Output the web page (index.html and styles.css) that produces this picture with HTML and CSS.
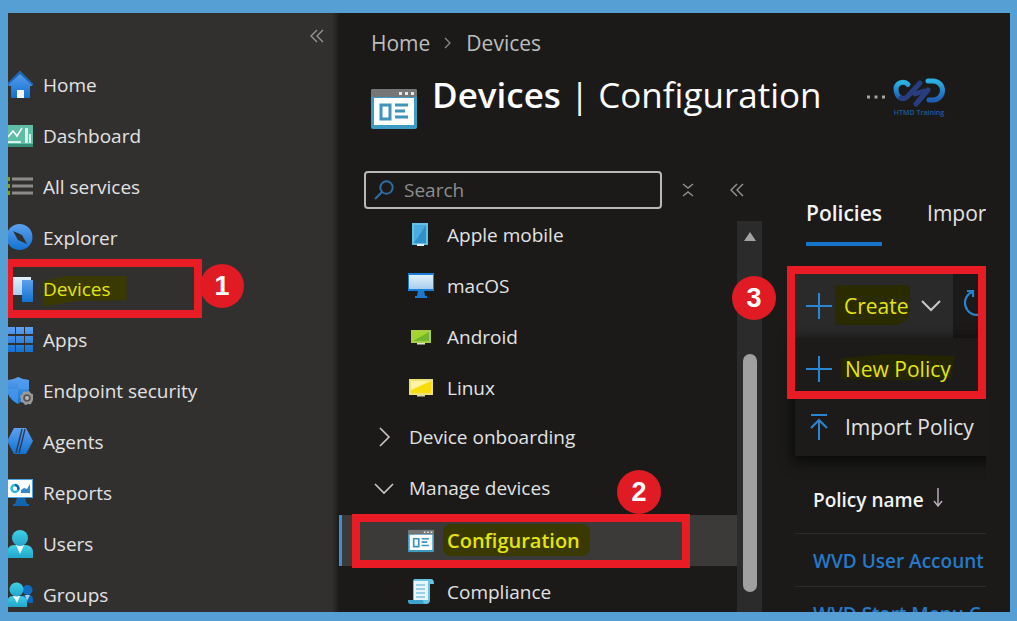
FILE: index.html
```html
<!DOCTYPE html>
<html lang="en">
<head>
<meta charset="utf-8">
<title>Devices | Configuration</title>
<link rel="stylesheet" href="styles.css">
</head>
<body>
<svg width="0" height="0" class="defs" aria-hidden="true">
  <defs>
    <linearGradient id="blue" x1="0" y1="0" x2="0" y2="1"><stop offset="0" stop-color="#5ea0ef"/><stop offset="1" stop-color="#1272cf"/></linearGradient>
    <linearGradient id="cyan" x1="0" y1="0" x2="0" y2="1"><stop offset="0" stop-color="#3fd0e6"/><stop offset="1" stop-color="#22a5cb"/></linearGradient>
    <linearGradient id="pale" x1="0" y1="0" x2="0" y2="1"><stop offset="0" stop-color="#e3f1fb"/><stop offset="1" stop-color="#a8cdf0"/></linearGradient>
    <linearGradient id="ring" x1="0" y1="0" x2="0" y2="1"><stop offset="0" stop-color="#2bb0e4"/><stop offset="1" stop-color="#1d5fb4"/></linearGradient>
    <symbol id="window" viewBox="0 0 46 40">
      <rect width="46" height="40" rx="2" fill="#3d9cc4"/><path d="M0 8V2q0-2 2-2h42q2 0 2 2v6z" fill="#767676"/>
      <path d="M3 9h40v27H3z" fill="#fff"/><path d="M28 3h3v3h-3zM34 3h3v3h-3zM40 3h3v3h-3z" fill="#e8e8e8"/>
      <path d="M10 16h9v14h-9zM24 16h13M24 22h10M24 28h13" fill="none" stroke="#3d94bd" stroke-width="3"/>
    </symbol>
    <symbol id="collapse" viewBox="0 0 14 14"><path d="M7 1L1 7l6 6M13 1L7 7l6 6" fill="none" stroke="currentColor" stroke-width="1.3"/></symbol>
    <symbol id="plus" viewBox="0 0 26 26"><path d="M13 0v26M0 13h26" fill="none" stroke="currentColor" stroke-width="2"/></symbol>
  </defs>
</svg>
<div class="frame">
  <nav class="sidebar" aria-label="Main">
    <button class="icon-button sidebar-toggle" aria-label="Collapse"><svg width="14" height="14"><use href="#collapse"/></svg></button>
    <ul class="list">
      <li><a class="nav-link" href="#"><svg class="nav-icon" viewBox="0 0 26 28"><path d="M13 0L0 13l2 2h2v12h19V15h2l1-2z" fill="url(#blue)"/><path d="M10 19h7v8h-7z" fill="#f4f4f4"/><path d="M13 0L0 13l1 1L13 3l12 11 1-1z" fill="#1666b8"/></svg>Home</a></li>
      <li><a class="nav-link" href="#"><svg class="nav-icon" viewBox="0 0 26 28"><path d="M0 3h26v22H0z" fill="#5fbda6"/><path d="M0 22h26v3H0z" fill="#368d77"/><path d="M1 15l5-6 4 5 5-8" fill="none" stroke="#fff" stroke-width="1.6"/><path d="M1 19h13v2H1zM18 6h3v15h-3zM22 12h2v9h-2z" fill="#d8f3ec"/></svg>Dashboard</a></li>
      <li><a class="nav-link" href="#"><svg class="nav-icon" viewBox="0 0 26 28"><path d="M5 6h21M5 13h21M5 20h21" stroke="#8b8b8b" stroke-width="3"/><path d="M0 6h3M0 13h3M0 20h3" stroke="#77a41b" stroke-width="4"/></svg>All services</a></li>
      <li><a class="nav-link" href="#"><svg class="nav-icon" viewBox="0 0 26 28"><circle cx="12.500" cy="13" r="13" fill="url(#blue)"/><path d="M6 7l9 4 5 9-9-4z" fill="#31302f"/></svg>Explorer</a></li>
      <li class="anchor"><a class="nav-link" href="#"><svg class="nav-icon" viewBox="0 0 26 28"><path d="M2 2h22v18H2z" fill="url(#pale)"/><path d="M15 5h11v22H15z" fill="url(#blue)"/></svg><mark class="mark mark-devices">Devices</mark></a>
        <span class="box box-one"></span><span class="badge badge-one">1</span></li>
      <li><a class="nav-link" href="#"><svg class="nav-icon" viewBox="0 0 26 28"><path d="M0 1h8v7H0zM9 1h8v7H9zM18 1h8v7h-8zM0 10h8v7H0zM9 10h8v7H9zM18 10h8v7h-8zM0 19h8v7H0zM9 19h8v7H9zM18 19h8v7h-8z" fill="url(#blue)"/></svg>Apps</a></li>
      <li><a class="nav-link" href="#"><svg class="nav-icon" viewBox="0 0 26 28"><path d="M11 0q5 3 11 3v9q0 9-11 15Q0 21 0 12V3q6 0 11-3z" fill="url(#blue)"/><path d="M11 0q5 3 11 3v9H11zM11 12v15Q1 21 0 12z" fill="#4f9ff0" opacity=".6"/><circle cx="20" cy="21" r="5" fill="#555" stroke="#9a9a9a" stroke-width="2.500"/><circle cx="20" cy="21" r="6" fill="none" stroke="#9a9a9a" stroke-width="2" stroke-dasharray="2.400 2.300"/><circle cx="20" cy="21" r="2" fill="#b8b8b8"/></svg>Endpoint security</a></li>
      <li><a class="nav-link" href="#"><svg class="nav-icon" viewBox="0 0 26 28"><path d="M7 0h12l7 13-7 13H7L0 13z" fill="url(#blue)"/><path d="M15 1L9 25M18 1l-6 24" fill="none" stroke="#283d5c" stroke-width="1.400"/></svg>Agents</a></li>
      <li><a class="nav-link" href="#"><svg class="nav-icon" viewBox="0 0 26 28"><path d="M10 19h8l2 6h2v2H6v-2h2z" fill="#1164ae"/><path d="M0 0h26v19H0z" fill="#4ca6e4"/><path d="M1 1h24v17H1z" fill="#fff"/><circle cx="8" cy="9.500" r="3.500" fill="none" stroke="#32b5e3" stroke-width="2.500"/><path d="M8 6a3.500 3.500 0 0 1 3 5" fill="none" stroke="#0f67b7" stroke-width="2.500"/><path d="M14 14v-3l3-2 3 1 3-5v9z" fill="#3289c8"/></svg>Reports</a></li>
      <li><a class="nav-link" href="#"><svg class="nav-icon" viewBox="0 0 26 28"><path d="M0 28v-5q0-8 8-8h10q8 0 8 8v5z" fill="url(#cyan)"/><path d="M9 15h8l-4 9z" fill="#f2fbfd"/><circle cx="13" cy="8" r="8" fill="url(#cyan)"/></svg>Users</a></li>
      <li><a class="nav-link" href="#"><svg class="nav-icon" viewBox="0 0 26 28"><path d="M14 21v-2q0-5 5-5h3q4 0 4 5v3z" fill="#0d66b9"/><path d="M18 14h5l-3 6z" fill="#9fd0f2"/><circle cx="20.500" cy="9" r="5" fill="#0f6dc4"/><path d="M0 26v-4q0-7 6-7h8q6 0 6 7v4z" fill="url(#cyan)"/><path d="M6 15h7l-3 7z" fill="#f2fbfd"/><circle cx="9.500" cy="8.500" r="7" fill="url(#cyan)"/></svg>Groups</a></li>
    </ul>
  </nav>

  <main class="main">
    <header class="header">
      <nav class="breadcrumb" aria-label="Breadcrumb"><a href="#">Home</a><svg width="8" height="12" viewBox="0 0 8 12"><path d="M1 1l5 5-5 5" fill="none" stroke="#8a8a8a" stroke-width="1.300"/></svg><a href="#">Devices</a></nav>
      <div class="title-row">
        <svg class="title-icon" width="46" height="40"><use href="#window"/></svg>
        <h1 class="title"><strong>Devices</strong> | Configuration</h1>
        <button class="icon-button more" aria-label="More"><svg width="18" height="4" viewBox="0 0 18 4"><path d="M0 .5h3v3H0zM7.500 .5h3v3h-3zM15 .5h3v3h-3z" fill="#a5a5a5"/></svg></button>
        <div class="logo">
          <svg width="53" height="30" viewBox="0 0 53 30"><g fill="none" stroke-linecap="round" stroke-width="5">
            <path d="M35 4h5a9.500 9.500 0 0 1 0 19h-4" stroke="url(#ring)"/><path d="M15 7.500A7 7 0 0 0 3 11q0 8 5 10" stroke="url(#ring)"/>
            <path d="M8 21q4 2 8-3L27 6M22 17l9-3M35 13L23 27" stroke="#273d7e"/></g></svg>
          <span>HTMD Training</span>
        </div>
      </div>
    </header>

    <div class="body">
      <section class="blade">
        <div class="search-row">
          <label class="search"><svg width="20" height="20" viewBox="0 0 20 20"><circle cx="12.500" cy="7.500" r="6.200" fill="none" stroke="#2f6ca5" stroke-width="2"/><path d="M8 12l-7 7" stroke="#2f6ca5" stroke-width="2.200"/></svg><input type="text" placeholder="Search" aria-label="Search"></label>
          <button class="icon-button" aria-label="Collapse groups"><svg width="12" height="14" viewBox="0 0 12 14"><path d="M1 1l5 4 5-4M1 13l5-4 5 4" fill="none" stroke="#8f8f8f" stroke-width="1.500"/></svg></button>
          <button class="icon-button" aria-label="Collapse menu"><svg width="14" height="14"><use href="#collapse"/></svg></button>
        </div>
        <div class="blade-scroll">
          <ul class="list blade-list">
            <li><a class="blade-link" href="#"><svg class="blade-icon" viewBox="0 0 26 26"><path d="M4 1h16v22H4z" fill="#66c0e5"/><path d="M6 3h12v18H6z" fill="#49aede"/><path d="M18 3v18H6z" fill="#318fc9"/><path d="M9 22h7v2H9z" fill="#e1eef5"/></svg>Apple mobile</a></li>
            <li><a class="blade-link" href="#"><svg class="blade-icon" viewBox="0 0 26 26"><path d="M10 17h6l1 6h2v2H7v-2h2z" fill="#1879cd"/><path d="M0 0h26v18H0z" fill="#1a7fd6"/><path d="M1 2h24v14H1z" fill="url(#pale)"/></svg>macOS</a></li>
            <li><a class="blade-link" href="#"><svg class="blade-icon" viewBox="0 0 26 26"><path d="M3 6h20v13H3z" fill="#a8cf47"/><path d="M5 8h16v9H5z" fill="#a2d52f"/><path d="M21 8v9H5z" fill="#73b52d"/><path d="M9 19h8v1.500H9z" fill="#dce8c9"/></svg>Android</a></li>
            <li><a class="blade-link" href="#"><svg class="blade-icon" viewBox="0 0 26 26"><path d="M1 4h24v16H1z" fill="#ece27a"/><path d="M3 6h20v12H3z" fill="#fff5a0"/><path d="M23 6v12H3v-3z" fill="#fbdc0b"/><path d="M9 20h8v1.500H9z" fill="#d9d5a5"/></svg>Linux</a></li>
            <li><a class="blade-link group" href="#"><svg width="20" height="20" viewBox="0 0 20 20"><path d="M6 1l9 9-9 9" fill="none" stroke="#c8c8c8" stroke-width="1.600"/></svg>Device onboarding</a></li>
            <li><a class="blade-link group" href="#"><svg width="20" height="20" viewBox="0 0 20 20"><path d="M1 6l9 9 9-9" fill="none" stroke="#c8c8c8" stroke-width="1.600"/></svg>Manage devices</a></li>
            <li class="anchor"><a class="blade-link selected" href="#" aria-current="page"><svg class="blade-icon" viewBox="0 0 46 40"><use href="#window"/></svg><mark class="mark mark-config">Configuration</mark></a>
              <span class="box box-two"></span><span class="badge badge-two">2</span></li>
            <li><a class="blade-link" href="#"><svg class="blade-icon" viewBox="0 0 26 26"><path d="M7 0h16q3 0 3 5h-4v16q0 4-4 4H3q-3 0-3-4h5V3q0-3 2-3z" fill="#69c2e2"/><path d="M6 2h14v19H6z" fill="#e7f6fc"/><path d="M8 6h9M8 10h9M8 14h9M8 18h9" stroke="#7fc4e2" stroke-width="1.600"/><path d="M0 21h15q0 4 3 4H3q-3 0-3-4z" fill="#3fa2cc"/></svg>Compliance</a></li>
          </ul>
          <div class="scrollbar"><span class="scroll-up"></span><span class="scroll-thumb"></span></div>
        </div>
      </section>

      <section class="content">
        <div class="content-clip">
          <div class="tabs" role="tablist"><button class="tab active" role="tab" aria-selected="true">Policies</button><button class="tab" role="tab">Import</button></div>
          <div class="toolbar">
            <button class="command create"><svg class="plus"><use href="#plus"/></svg><mark class="mark mark-create">Create</mark><svg width="20" height="12" viewBox="0 0 20 12"><path d="M1 1l9 9 9-9" fill="none" stroke="#c8c8c8" stroke-width="2"/></svg></button>
            <button class="command refresh" aria-label="Refresh"><svg width="26" height="28" viewBox="0 0 26 28"><path d="M8 3A12 12 0 1 0 18 3M3 2h6v6" fill="none" stroke="#2b83cc" stroke-width="2.200"/></svg></button>
            <div class="menu" role="menu">
              <button class="command" role="menuitem"><svg class="plus"><use href="#plus"/></svg><mark class="mark mark-new">New Policy</mark></button>
              <button class="command" role="menuitem"><svg class="plus" viewBox="0 0 26 26"><path d="M5 1h16M13 26V6M5 14l8-8 8 8" fill="none" stroke="currentColor" stroke-width="2"/></svg>Import Policy</button>
            </div>
          </div>
          <table class="policies">
            <thead><tr><th scope="col">Policy name <svg width="10" height="19" viewBox="0 0 10 19"><path d="M5 0v18M1 13l4 5 4-5" fill="none" stroke="#b9a9b9" stroke-width="1.500"/></svg></th></tr></thead>
            <tbody><tr><td><a href="#">WVD User Account</a></td></tr><tr><td><a href="#">WVD Start Menu C</a></td></tr></tbody>
          </table>
        </div>
        <span class="box box-three"></span><span class="badge badge-three">3</span>
      </section>
    </div>
  </main>
</div>
</body>
</html>
```
FILE: styles.css
```css
* { box-sizing: border-box; }
body {
  margin: 0;
  height: 100vh;
  padding: 13px 7px 9px 8px;
  background: #569fd5;
  color: #e2e2e2;
  font-family: "Open Sans", "Noto Sans", sans-serif;
  font-size: 19px;
  font-weight: 500;
  line-height: 26px;
  overflow: hidden;
}
a { color: inherit; text-decoration: none; }
button { border: 0; background: none; padding: 0; color: inherit; font: inherit; }
svg { flex: none; }
.defs { position: absolute; }
.list { list-style: none; margin: 0; padding: 0; }
.anchor { position: relative; }
.icon-button { display: flex; color: #999; }

.frame { display: flex; height: 100%; overflow: hidden; background: #1b1a19; }

.sidebar {
  flex: none;
  width: 331px;
  background: linear-gradient(to left, #1c1b1a, #32302f 7px);
}
.sidebar-toggle { margin: 16px 15px 16px auto; }
.nav-link { display: flex; align-items: center; gap: 10px; height: 51px; margin-left: -1px; }
.nav-icon { width: 26px; height: 28px; }

.main { flex: 1; min-width: 0; display: flex; flex-direction: column; padding-right: 24px; }
.header { flex: none; padding: 17px 0 42px 32px; }
.breadcrumb { display: flex; align-items: center; gap: 14px; font-size: 21px; font-weight: 400; color: #bdbdbd; }
.title-row { display: flex; align-items: flex-start; margin-top: 17px; height: 56px; }
.title-icon { align-self: flex-end; }
.title { margin: 0 0 0 15px; color: #fff; font-size: 35px; line-height: 44px; font-weight: 400; white-space: nowrap; }
.title strong { font-weight: 600; }
.more { margin: 22px 0 0 45px; }
.logo { display: flex; flex-direction: column; align-items: center; margin: 4px 0 0 8px; color: #1d5c9f; font-size: 7px; line-height: 12px; font-weight: 600; }
.logo span { white-space: nowrap; }

.body { flex: 1; min-height: 0; display: flex; }
.blade { flex: none; width: 423px; display: flex; flex-direction: column; }
.search-row { display: flex; align-items: center; gap: 20px; padding-left: 25px; }
.search { flex: none; display: flex; align-items: center; gap: 10px; width: 298px; height: 38px; padding: 0 8px; border: 2px solid #b8b8b8; border-radius: 4px; }
.search input { flex: 1; min-width: 0; padding: 0; border: 0; outline: 0; background: none; color: inherit; font: inherit; font-weight: 400; }
.search input::placeholder { color: #8d8d8d; opacity: 1; }
.search-row .icon-button + .icon-button { margin-left: 16px; }
.blade-scroll { flex: 1; min-height: 0; display: flex; }
.blade-list { flex: 1; }
.blade-link { display: flex; align-items: center; gap: 13px; height: 51px; padding-left: 69px; }
.blade-icon { width: 26px; height: 26px; }
.group { gap: 15px; padding: 0 0 4px 35px; }
.selected { padding-left: 66px; border-left: 3px solid #3a8fd6; background: #3b3a39; font-size: 20px; font-weight: 600; }
.scrollbar { width: 25px; margin-top: 12px; padding-top: 11px; display: flex; flex-direction: column; align-items: center; background: #2b2b2b; }
.scroll-up { border: 6px solid transparent; border-top: 0; border-bottom: 9px solid #a3a3a3; }
.scroll-thumb { width: 14px; height: 238px; margin-top: 113px; border-radius: 7px; background: #a0a0a0; }

.content { flex: 1; min-width: 0; position: relative; }
.content-clip { height: 100%; padding-left: 33px; overflow: hidden; }
.tabs { display: flex; gap: 45px; padding: 29px 0 28px 11px; font-size: 21px; }
.tab { flex: none; padding-bottom: 16px; border-bottom: 4px solid transparent; white-space: nowrap; }
.active { border-color: #1775c9; color: #f4f4f4; font-weight: 600; }
.toolbar { display: flex; position: relative; font-size: 21px; }
.command { display: flex; align-items: center; gap: 13px; height: 58px; padding-left: 11px; white-space: nowrap; }
.plus { width: 26px; height: 26px; color: #2b86d1; }
.create { flex: none; gap: 12px; width: 158px; height: 64px; background: #2a2a2a; }
.refresh { flex: none; }
.menu { position: absolute; top: 64px; left: 0; width: 240px; padding-top: 2px; background: #1c1b1a; box-shadow: 0 4px 12px 2px #0a0a0a; }
.policies { width: 240px; margin-top: 130px; border-collapse: collapse; table-layout: fixed; }
.policies th, .policies td { height: 53px; padding: 3px 0 0 18px; border-top: 1px solid #2c2b2a; text-align: left; white-space: nowrap; }
.policies th { height: 65px; padding-top: 0; border-top: 0; color: #f2f2f2; font-weight: 600; }
.policies th svg { margin-left: 4px; }
.policies td { color: #2579c9; font-weight: 600; }

.mark { position: relative; z-index: 0; background: none; color: #e4e50d; }
.mark::before { content: ""; position: absolute; z-index: -1; inset: 0; background: #393900; }
.mark-devices::before { inset: 0 -16px -5px 0; clip-path: polygon(0 18%, 30% 0, 100% 0, 100% 80%, 40% 82%, 0 100%); }
.mark-config::before { inset: -4px -10px -2px -4px; border-radius: 8px; }
.mark-create::before { inset: -8px -1px -6px -9px; border-radius: 4px 4px 16px 4px; background: #2b2b00; }
.mark-new::before { inset: -2px -4px 0; background: #252500; clip-path: polygon(0 15%, 40% 0, 100% 8%, 97% 88%, 60% 94%, 0 90%); }

.box { position: absolute; border: 8px solid #e91c25; pointer-events: none; }
.box-one { top: -4px; left: 0; width: 194px; height: 59px; border-left-width: 5px; }
.box-two { top: -1px; left: 13px; width: 338px; height: 54px; }
.box-three { top: 95px; left: 25px; right: 0; height: 133px; }
.badge {
  position: absolute;
  display: flex;
  align-items: center;
  justify-content: center;
  width: 44px;
  height: 44px;
  border-radius: 50%;
  background: #e01b24;
  color: #fff;
  font: bold 27px "Liberation Sans", sans-serif;
}
.badge-one { top: 1px; left: 192px; }
.badge-two { top: -45px; left: 278px; }
.badge-three { top: 105px; left: -30px; }
```
